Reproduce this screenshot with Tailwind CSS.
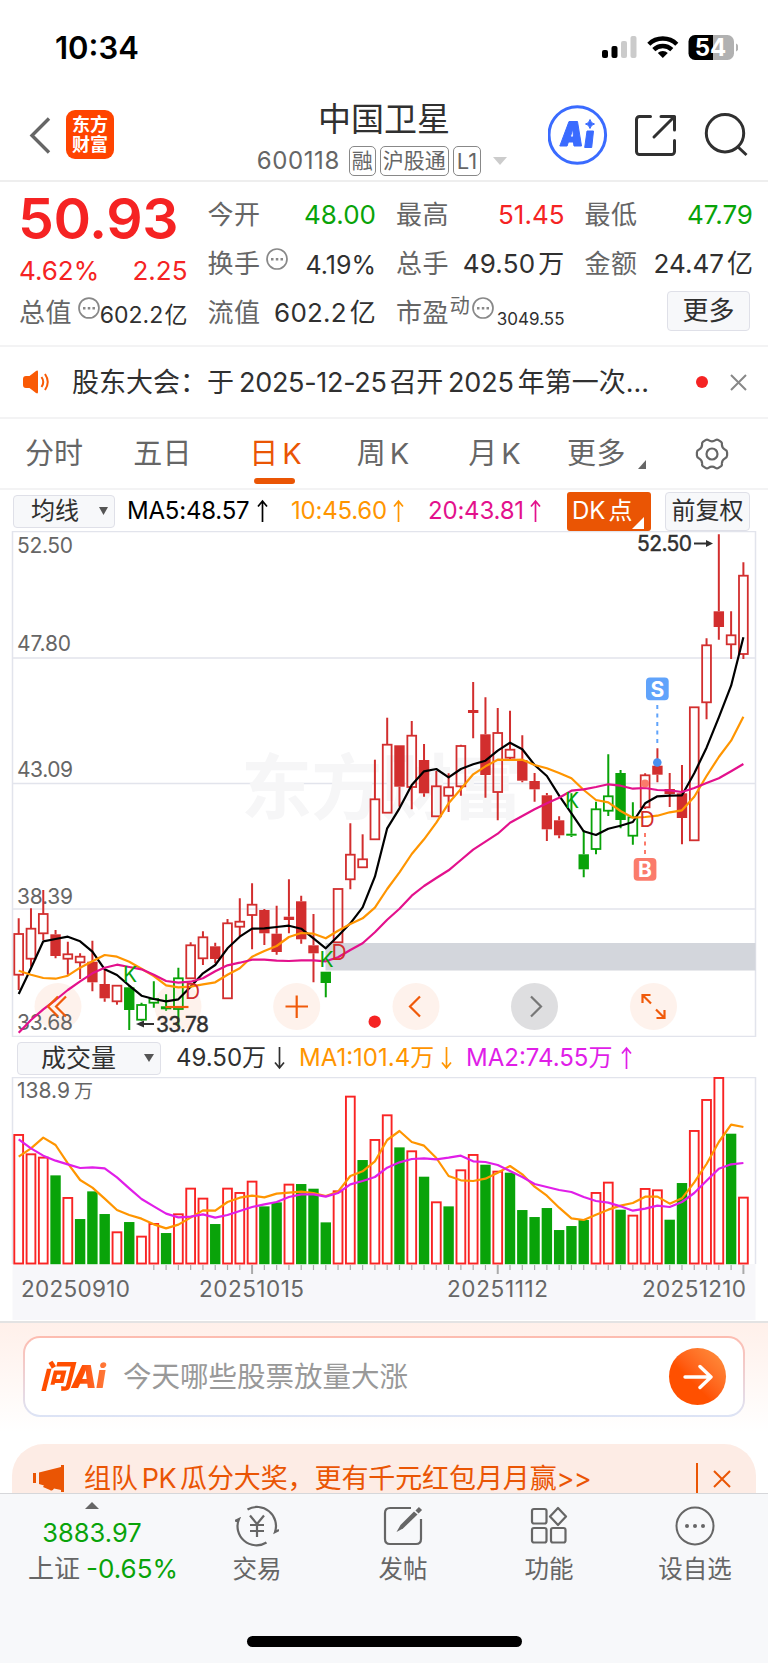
<!DOCTYPE html>
<html lang="zh-CN">
  <head>
    <meta charset="UTF-8" />
    <meta name="viewport" content="width=device-width, initial-scale=1.0" />
    <title>中国卫星 600118</title>
    <script src="https://cdn.jsdelivr.net/npm/@tailwindcss/browser@4"></script>
  </head>
  <body class="bg-white">
    <div class="w-[768px] h-[1663px] overflow-hidden flex flex-col bg-white text-[#303030] whitespace-nowrap leading-none font-[Inter,'Noto_Sans_CJK_SC',sans-serif]">
      <!-- status bar -->
      <div class="h-[92px] shrink-0 flex justify-between pl-[55px] pr-[30px] pt-[31px]">
        <span class="text-[31px] font-semibold text-black leading-[33px]">10:34</span>
        <svg class="mt-[3px]" width="138" height="28" viewBox="600 34 138 28">
          <rect x="602" y="50" width="6" height="8" rx="2" />
          <rect x="611.5" y="46" width="6" height="12" rx="2" />
          <rect x="621" y="41" width="6" height="17" rx="2" fill="#cbcbcb" />
          <rect x="630.5" y="36" width="6" height="22" rx="2" fill="#cbcbcb" />
          <g fill="none" stroke="#000" stroke-width="4.4">
            <path d="M648.8 44.2a20 20 0 0 1 28 0" />
            <path d="M653.8 49.6a13 13 0 0 1 18 0" />
          </g>
          <path d="M662.8 58l-5-5a7.5 7.5 0 0 1 10 0z" />
          <path d="M695 35h18v25h-18a6.500 6.500 0 0 1-6.500-6.500v-12a6.500 6.500 0 0 1 6.500-6.500z" />
          <path d="M713 35h14.500a6.500 6.500 0 0 1 6.500 6.500v12a6.500 6.500 0 0 1-6.500 6.500h-14.500z" fill="#b1b1b1" />
          <path d="M736 43.500q2.500 1 2.500 4t-2.500 4z" fill="#b1b1b1" />
          <text x="710.500" y="55.800" text-anchor="middle" font-size="24" font-weight="700" fill="#fff">54</text>
        </svg>
      </div>

      <!-- header -->
      <div class="h-[90px] shrink-0 flex border-b-2 border-[#eee]">
        <div class="w-[218px] flex pt-[18px] pl-[29px]">
          <svg class="mt-[7px]" width="22" height="38" viewBox="0 0 22 38" fill="none" stroke="#666" stroke-width="3.400">
            <path d="M20 1.500L3 18.500l17 17" />
          </svg>
          <div class="ml-[15px] w-[48px] h-[49px] rounded-[9px] bg-[#ff4400] text-white text-[18px] font-bold leading-[20px] text-center pt-[5px]">东方<br />财富</div>
        </div>
        <div class="w-[330px] flex flex-col items-center pt-[9px]">
          <h1 class="text-[33px] leading-[36px] ml-[2px]">中国卫星</h1>
          <div class="flex items-center text-[#666] mt-[9px] ml-[-2px]">
            <span class="text-[24px] w-[92px] tracking-[0.6px]">600118</span>
            <span class="text-[21px] h-[30px] leading-[28px] border-[1.5px] border-[#888] rounded-[5px] px-[2px] mr-[4px]">融</span>
            <span class="text-[21px] h-[30px] leading-[28px] border-[1.5px] border-[#888] rounded-[5px] px-[2px] mr-[4px]">沪股通</span>
            <span class="text-[22px] h-[30px] leading-[28px] border-[1.5px] border-[#888] rounded-[5px] px-[3px] mr-[12px]">L1</span>
            <svg width="14" height="8" viewBox="0 0 14 8"><path d="M0 0h14l-7 8z" fill="#ccc" /></svg>
          </div>
        </div>
        <svg width="220" height="66" viewBox="548 102 220 66" class="mt-[10px]" fill="none" stroke="#303030" stroke-width="3">
          <circle cx="577.300" cy="135" r="28.300" stroke="#3a6bff" />
          <path d="M569 121.500h8.500l4 24.500h-7.500l-.6-4h-5l-1.300 4h-7.300zM572.800 129l-2.500 8h3.200zM587 131h6.500l-1.800 16.500h-7z" fill="#3a6bff" fill-rule="evenodd" stroke="#3a6bff" stroke-width="1" stroke-linejoin="round" />
          <path d="M590 119.500q1 4 4.500 4.500-3.500.6-4.500 4.500-1-4-4.500-4.500 3.500-.5 4.500-4.500z" fill="#3a6bff" stroke="#3a6bff" stroke-width="1" />
          <g stroke-linecap="round" stroke-linejoin="round">
            <path d="M650.500 116.500h-11a3 3 0 0 0-3 3v32a3 3 0 0 0 3 3h32a3 3 0 0 0 3-3v-11" />
            <path d="M661 116.500h13.500v13.500M674 117l-20 20" />
          </g>
          <circle cx="725" cy="133.200" r="18.700" />
          <path d="M737.500 146.500l9 8.500" />
        </svg>
      </div>

      <!-- quote -->
      <div class="h-[165px] shrink-0 grid grid-cols-4 gap-x-5 pl-[19px] pr-[15px] pt-[9px] text-[26px] border-b-2 border-[#f3f3f4]">
        <div class="flex flex-col text-[#f52323]">
          <div class="h-[54px] flex items-center text-[57px] font-semibold tracking-[-0.4px] ml-[-1px]">50.93</div>
          <div class="h-[52px] flex items-center justify-between"><span>4.62%</span><span>2.25</span></div>
          <div class="h-[32px] flex items-center text-[#303030]">
            <span class="text-[#666] tracking-[0.4px]">总值</span>
            <svg class="ml-[6px] mb-[10px]" width="22" height="22" viewBox="0 0 22 22"><circle cx="11" cy="11" r="10" fill="none" stroke="#888" stroke-width="1.700" /><path d="M5 10h2.500v2.500H5zM9.800 10h2.500v2.500H9.800zM14.500 10H17v2.500h-2.500z" fill="#888" /></svg>
            <span class="text-[23px] mt-[4px] w-[88px] flex justify-between"><span>602.2</span><span>亿</span></span>
          </div>
        </div>
        <div class="flex flex-col">
          <div class="h-[48px] flex items-center justify-between"><span class="text-[#666] tracking-[0.4px]">今开</span><span class="text-[#09a309]">48.00</span></div>
          <div class="h-[49px] flex items-center">
            <span class="text-[#666] tracking-[0.4px]">换手</span>
            <svg class="ml-[6px] mb-[10px]" width="22" height="22" viewBox="0 0 22 22"><circle cx="11" cy="11" r="10" fill="none" stroke="#888" stroke-width="1.700" /><path d="M5 10h2.500v2.500H5zM9.800 10h2.500v2.500H9.800zM14.500 10H17v2.500h-2.500z" fill="#888" /></svg>
            <span class="ml-auto text-[25px] mt-[3px]">4.19%</span>
          </div>
          <div class="h-[49px] flex items-center justify-between"><span class="text-[#666] tracking-[0.4px]">流值</span><span class="tracking-[0.2px]">602.2<span class="ml-[3px]">亿</span></span></div>
        </div>
        <div class="flex flex-col">
          <div class="h-[48px] flex items-center justify-between"><span class="text-[#666] tracking-[0.4px]">最高</span><span class="text-[#f52323]">51.45</span></div>
          <div class="h-[49px] flex items-center justify-between"><span class="text-[#666] tracking-[0.4px]">总手</span><span class="tracking-[0.2px]">49.50<span class="ml-[3px]">万</span></span></div>
          <div class="h-[49px] flex items-center">
            <span class="text-[#666] tracking-[0.4px]">市盈</span><span class="text-[20px] text-[#666] mb-[14px] ml-[1px]">动</span>
            <svg class="ml-[2px] mb-[10px]" width="22" height="22" viewBox="0 0 22 22"><circle cx="11" cy="11" r="10" fill="none" stroke="#888" stroke-width="1.700" /><path d="M5 10h2.500v2.500H5zM9.800 10h2.500v2.500H9.800zM14.500 10H17v2.500h-2.500z" fill="#888" /></svg>
            <span class="ml-auto text-[17px] mt-[13px]">3049.55</span>
          </div>
        </div>
        <div class="flex flex-col">
          <div class="h-[48px] flex items-center justify-between"><span class="text-[#666] tracking-[0.4px]">最低</span><span class="text-[#09a309]">47.79</span></div>
          <div class="h-[49px] flex items-center justify-between"><span class="text-[#666] tracking-[0.4px]">金额</span><span>24.47<span class="ml-[3px]">亿</span></span></div>
          <button class="self-end mt-[3px] mr-[3px] w-[83px] h-[40px] rounded-[4px] border border-[#dfe0e8] bg-[#f7f8fa]">更多</button>
        </div>
      </div>

      <!-- notice -->
      <div class="h-[72px] shrink-0 flex items-center pl-[23px] pr-[21px] border-b-2 border-[#f3f3f4] text-[27px]">
        <svg width="28" height="24" viewBox="0 0 28 24" fill="#f95a05">
          <path d="M0 9q0-3 3-3h3.500L13 1q2-1.300 2 1v20q0 2.300-2 1l-6.500-5H3q-3 0-3-3z" />
          <path d="M18.500 7q3.500 5 0 10M22 4q5.500 8 0 16" fill="none" stroke="#f95a05" stroke-width="2" />
        </svg>
        <span class="ml-[21px]">股东大会：</span>
        <span>于</span><span class="ml-[5px] tracking-[-0.3px]">2025-12-25</span><span class="ml-[3px] tracking-[-0.3px]">召开</span><span class="ml-[5px] tracking-[-0.2px]">2025</span><span class="ml-[4px]">年第一次...</span>
        <span class="ml-auto w-[12px] h-[12px] rounded-full bg-[#f52323]"></span>
        <svg class="ml-[22px]" width="17" height="17" viewBox="0 0 17 17" stroke="#888" stroke-width="2"><path d="M1 1l15 15M16 1L1 16" /></svg>
      </div>

      <!-- period tabs -->
      <div class="h-[71px] shrink-0 grid grid-cols-[108px_109px_119px_96px_126px_98px_112px] border-b-2 border-[#f3f3f4] text-[29px] text-[#666]">
        <div class="flex items-center justify-center">分时</div>
        <div class="flex items-center justify-center tracking-[0.3px]">五日</div>
        <div class="flex flex-col items-center text-[#ea5504]">
          <div class="h-[59px] pt-[20px] mr-[2px]">日<span class="ml-[4px]">K</span></div>
          <div class="w-[41px] h-[6px] rounded-[3px] bg-[#ea5504] mr-[4px]"></div>
        </div>
        <div class="flex items-center justify-center pr-[2px]">周<span class="ml-[4px]">K</span></div>
        <div class="flex items-center justify-center pr-[1px]">月<span class="ml-[4px]">K</span></div>
        <div class="flex items-center pl-[9px] tracking-[0.5px]">更多<svg class="ml-[12px] mt-[22px]" width="9" height="9" viewBox="0 0 9 9"><path d="M8 0v9H0z" fill="#666" /></svg></div>
        <div class="flex items-center justify-center">
          <svg width="34" height="32" viewBox="0 0 34 32" fill="none" stroke="#666" stroke-width="2.200">
            <path d="M10.500 2.200q1.500-1 3 0 3.500 2.300 7 0 1.500-1 3 0l2.600 1.700q1 .8.800 2.200-.2 3.500 3 5.500 2.200 1 2.200 2.800v3.200q0 1.800-2.200 2.800-3.200 2-3 5.500.2 1.400-.8 2.200l-2.600 1.700q-1.500 1-3 0-3.500-2.300-7 0-1.500 1-3 0l-2.600-1.700q-1-.8-.8-2.200.2-3.500-3-5.500-2.200-1-2.200-2.800v-3.200q0-1.800 2.200-2.800 3.200-2 3-5.500-.2-1.400.8-2.200z" />
            <circle cx="17" cy="16" r="5.500" />
          </svg>
        </div>
      </div>

      <!-- moving averages -->
      <div class="h-[41px] shrink-0 flex items-center pl-[13px] pt-px text-[24px]">
        <div class="w-[102px] h-[33px] flex items-center rounded-[4px] border border-[#dfe0e8] bg-[#f7f8fa] pl-[17px]">均线<svg class="ml-[20px]" width="9" height="8" viewBox="0 0 9 8"><path d="M0 0h9l-4.500 8z" fill="#555" /></svg></div>
        <span class="ml-[12px] w-[129px] text-black tracking-[-0.2px]">MA5:48.57</span>
        <svg width="13" height="24" viewBox="0 0 13 24" fill="none" stroke="#000" stroke-width="1.700"><path d="M6.500 23V2M2 7.500L6.500 2 11 7.500" /></svg>
        <span class="ml-[22px] w-[101px] text-[#ff9500] tracking-[-0.2px]">10:45.60</span>
        <svg width="13" height="24" viewBox="0 0 13 24" fill="none" stroke="#ff9500" stroke-width="1.700"><path d="M6.500 23V2M2 7.500L6.500 2 11 7.500" /></svg>
        <span class="ml-[23px] w-[101px] text-[#e3118c] tracking-[-0.2px]">20:43.81</span>
        <svg width="13" height="24" viewBox="0 0 13 24" fill="none" stroke="#e3118c" stroke-width="1.700"><path d="M6.500 23V2M2 7.500L6.500 2 11 7.500" /></svg>
        <div class="ml-[25px] w-[84px] h-[39px] flex items-center rounded-[3px] bg-[#ea5504] text-white pl-[5px]">DK<span class="ml-[3px]">点</span><svg class="mt-[23px]" width="12" height="12" viewBox="0 0 12 12"><path d="M12 0v12H0z" fill="#fff" /></svg></div>
        <div class="ml-[14px] w-[85px] h-[39px] flex items-center justify-center rounded-[4px] border border-[#dfe0e8] bg-[#f7f8fa]">前复权</div>
      </div>

      <!-- candles -->
      <svg id="kline" class="shrink-0" width="768" height="506" viewBox="0 531 768 506">
        <g fill="none" stroke="#e2e4ec" stroke-width="1.500">
          <path d="M12.500 531.500h743v505h-743z" />
          <path d="M12.500 658h743M12.500 783.500h743M12.500 909h743" />
        </g>
        <text x="241" y="813" font-size="71" font-weight="700" fill="#f6f6f7" textLength="282">东方财富</text>
        <rect x="325.500" y="943" width="430" height="27.500" fill="#d3d6dc" />
        <g id="kline-buttons">
          <g fill="#fef2ec">
            <circle cx="58" cy="1006.500" r="23.500" />
            <circle cx="178" cy="1006.500" r="23.500" />
            <circle cx="296.700" cy="1006.500" r="23.500" />
            <circle cx="416" cy="1006.500" r="23.500" />
            <circle cx="534.500" cy="1006.500" r="23.500" fill="#dedee0" />
            <circle cx="653.500" cy="1006.500" r="23.500" />
          </g>
        </g>
        <g font-size="21" fill="#666">
          <text x="17" y="553" textLength="56">52.50</text>
          <text x="17" y="650.500" textLength="54">47.80</text>
          <text x="17" y="777" textLength="56">43.09</text>
          <text x="17" y="904" textLength="56">38.39</text>
          <text x="17" y="1030" textLength="56">33.68</text>
        </g>
        <g id="candles"></g>
        <g id="averages" fill="none" stroke-width="2.200"></g>
        <g font-size="21" fill="#09a309">
          <text x="123" y="982">K</text>
          <text x="319.500" y="966.500">K</text>
          <text x="565" y="808">K</text>
        </g>
        <g font-size="21" fill="#d22e2e">
          <text x="185" y="998.500">D</text>
          <text x="331.500" y="960">D</text>
          <text x="639.500" y="827">D</text>
        </g>
        <g font-size="21" fill="#303030" stroke="#303030" stroke-width=".4">
          <text x="637" y="551" textLength="55">52.50</text>
          <text x="156" y="1032" textLength="53">33.78</text>
        </g>
        <g stroke="#303030" stroke-width="2" fill="#303030">
          <path d="M694 543.500h14" /><path d="M706 540l7 3.500-7 3.500z" stroke="none" />
          <path d="M154 1024h-12" /><path d="M144 1020.500l-8 3.500 8 3.500z" stroke="none" />
        </g>
        <!-- trade marks -->
        <circle cx="657.300" cy="762.500" r="4.300" fill="#4a90f0" />
        <path d="M657.300 705v40" stroke="#60a3fb" stroke-width="2" stroke-dasharray="4 4.500" />
        <rect x="646" y="677.500" width="22.700" height="22.700" rx="4" fill="#60a3fb" />
        <text x="657.300" y="696.500" text-anchor="middle" font-size="21" font-weight="700" fill="#fff">S</text>
        <circle cx="645" cy="783.500" r="4" fill="#fb7b6b" />
        <path d="M645 833v22" stroke="#fb7b6b" stroke-width="2" stroke-dasharray="4 4.500" />
        <rect x="633.700" y="858" width="22.700" height="22.700" rx="4" fill="#fb7b6b" />
        <text x="645" y="877" text-anchor="middle" font-size="21" font-weight="700" fill="#fff">B</text>
        <!-- chart control glyphs -->
        <g fill="none" stroke="#f05a0a" stroke-width="2.200">
          <path d="M58 996.500l-10 10 10 10M66 996.500l-10 10 10 10" />
          <path d="M165.500 1007h23" />
          <path d="M285.500 1006.500h22.500M296.700 995.500v22.500" />
          <path d="M420 996.500l-10 10 10 10" />
          <path d="M531 996.500l10 10-10 10" stroke="#777" />
          <path d="M642.500 1003v-8h8M643 995.500l8 8M664.500 1010v8h-8M664 1017.500l-8-8" />
        </g>
        <circle cx="374.700" cy="1021.700" r="6.200" fill="#f52323" />
      </svg>

      <!-- volume legend -->
      <div class="h-[40px] shrink-0 flex items-center pl-[17px] pt-[2px] text-[24px]">
        <div class="w-[144px] h-[33px] flex items-center rounded-[4px] border border-[#dfe0e8] bg-[#f7f8fa] pl-[23px] text-[25px]">成交量<svg class="ml-[28px]" width="10" height="8" viewBox="0 0 10 8"><path d="M0 0h10l-5 8z" fill="#555" /></svg></div>
        <span class="ml-[15px] w-[97px]">49.50万</span>
        <svg width="13" height="24" viewBox="0 0 13 24" fill="none" stroke="#303030" stroke-width="1.700"><path d="M6.500 1v21M2 16.500L6.500 22l4.500-5.500" /></svg>
        <span class="ml-[13px] w-[141px] text-[#ff9500]">MA1:101.4万</span>
        <svg width="13" height="24" viewBox="0 0 13 24" fill="none" stroke="#ff9500" stroke-width="1.700"><path d="M6.500 1v21M2 16.500L6.500 22l4.500-5.500" /></svg>
        <span class="ml-[13px] w-[154px] text-[#e01ee8]">MA2:74.55万</span>
        <svg width="13" height="24" viewBox="0 0 13 24" fill="none" stroke="#e01ee8" stroke-width="1.700"><path d="M6.500 23V2M2 7.500L6.500 2 11 7.500" /></svg>
      </div>

      <!-- volume bars and date axis -->
      <svg id="volume" class="shrink-0" width="768" height="244" viewBox="0 1077 768 244">
        <path d="M12.500 1264v-186.500h743v186.500" fill="none" stroke="#e2e4ec" stroke-width="1.500" />
        <rect x="12.500" y="1264" width="743" height="56" fill="#f7f7fa" />
        <g font-size="21" fill="#666">
          <text x="17" y="1097.500" textLength="53">138.9</text>
          <text x="74" y="1098" font-size="19">万</text>
        </g>
        <g id="volume-bars"></g>
        <g id="volume-averages" fill="none" stroke-width="2.200"></g>
        <g font-size="22.500" fill="#666">
          <text x="21" y="1297" textLength="109">20250910</text>
          <text x="199" y="1297" textLength="105">20251015</text>
          <text x="447" y="1297" textLength="101">20251112</text>
          <text x="642" y="1297" textLength="104">20251210</text>
        </g>
      </svg>

      <!-- ask AI -->
      <div class="h-[123px] shrink-0 border-t-2 border-[#e3e3e3] bg-linear-to-b from-[#fff0ea] to-white to-90% px-[23px] pt-[13px]">
        <div class="h-[81px] rounded-[17px] bg-linear-to-b from-[#fdbcb0] to-[#dce4f6] p-[2px]">
          <div class="h-[77px] rounded-[15px] bg-white flex items-center pl-[14px] pr-[17px]">
            <span class="w-[84px] text-[32px] font-black italic tracking-[-0.6px] bg-linear-to-r from-[#ff4e00] from-50% to-[#ff9350] bg-clip-text text-transparent leading-[40px] pl-px">问Ai</span>
            <span class="text-[28.500px] text-[#999] pt-[2px]">今天哪些股票放量大涨</span>
            <div class="ml-auto w-[57px] h-[57px] rounded-full bg-linear-to-tr from-[#ff5000] from-40% to-[#ff9340] flex items-center justify-center">
              <svg width="30" height="26" viewBox="0 0 30 26" fill="none" stroke="#fff" stroke-width="3.400" stroke-linecap="round" stroke-linejoin="round"><path d="M2 13h26M17 2.500L28 13 17 23.500" /></svg>
            </div>
          </div>
        </div>
      </div>

      <!-- promo banner -->
      <div class="h-[49px] shrink-0 mx-[12px] rounded-t-[32px] bg-[#fdece5] flex pl-[21px] pr-[25px] text-[27px] text-[#ea5504]">
        <svg class="mt-[20px]" width="32" height="28" viewBox="0 0 32 28" fill="#ea5504"><path d="M0 9h3v10H0zM6 8.500L28 3V1h3v27h-3v-2l-7-1.500q-1.500 3-4 1.500L10 23l1-1.500-5-1.500z" /></svg>
        <span class="ml-[19px] pt-[21px] tracking-[-0.1px]">组队<span class="mx-[4px] tracking-[-0.6px]">PK</span>瓜分大奖，更有千元红包月月赢<span class="tracking-[-0.6px]">&gt;&gt;</span></span>
        <span class="ml-auto mt-[19px] w-[2px] h-[30px] bg-[#ea5504]"></span>
        <svg class="ml-[15px] mt-[26px]" width="18" height="18" viewBox="0 0 18 18" stroke="#ea5504" stroke-width="2"><path d="M1 1l16 16M17 1L1 17" /></svg>
      </div>

      <!-- bottom nav -->
      <div class="h-[170px] shrink-0 border-t border-[#d6d7da] bg-[#f7f8fa] flex flex-col">
        <div class="grid grid-cols-[184px_repeat(4,1fr)] h-[142px] text-[26px] text-[#666]">
          <div class="flex flex-col items-center pt-[8px]">
            <svg width="14" height="7" viewBox="0 0 14 7"><path d="M7 0l7 7H0z" fill="#666" /></svg>
            <span class="mt-[11px] text-[25.500px] leading-[26px] text-[#09a309]">3883.97</span>
            <div class="mt-[10px] ml-[22px] flex gap-[6px]"><span>上证</span><span class="text-[#09a309]">-0.65%</span></div>
          </div>
          <div class="flex flex-col items-center pt-[11px]">
            <svg width="44" height="42" viewBox="0 0 44 42" fill="none" stroke="#666" stroke-width="2.200"><path d="M12.500 4.500A19 19 0 0 1 40 27l4-2M31.500 37.500A19 19 0 0 1 4 14l-4 2" /><path d="M15 10.500l7 8.500 7-8.500M22 19v13M15 20h14M15 26h14" /></svg>
            <span class="mt-[10px] text-[24.500px]">交易</span>
          </div>
          <div class="flex flex-col items-center pt-[11px]">
            <svg width="40" height="42" viewBox="0 0 40 42" fill="none" stroke="#666" stroke-width="2.200"><path d="M28 3H7Q2 3 2 8v26q0 5 5 5h26q5 0 5-5V14" /><path d="M34 7l3.500-3.500" stroke-width="4.500" /><path d="M13.500 27l4-7L31 6.500l3.500 3L20 23.500z" fill="#666" stroke="none" /></svg>
            <span class="mt-[10px] text-[24.500px]">发帖</span>
          </div>
          <div class="flex flex-col items-center pt-[11px]">
            <svg width="38" height="42" viewBox="0 0 38 42" fill="none" stroke="#666" stroke-width="2.200"><rect x="2" y="4" width="14.500" height="14.500" rx="2" /><rect x="2" y="23" width="14.500" height="14.500" rx="2" /><rect x="21" y="23" width="14.500" height="14.500" rx="2" /><path d="M28 3l8 8.500-8 8.500-8-8.500z" stroke-linejoin="round" /></svg>
            <span class="mt-[10px] text-[24.500px]">功能</span>
          </div>
          <div class="flex flex-col items-center pt-[11px]">
            <svg width="42" height="42" viewBox="0 0 42 42" fill="none" stroke="#666" stroke-width="2"><circle cx="21" cy="21" r="18.500" /><g fill="#666" stroke="none"><circle cx="13" cy="21" r="2" /><circle cx="21" cy="21" r="2" /><circle cx="29" cy="21" r="2" /></g></svg>
            <span class="mt-[10px] text-[24.500px]">设自选</span>
          </div>
        </div>
        <div class="w-[275px] h-[11px] rounded-full bg-black ml-[247px]"></div>
      </div>
    </div>

    <script>
      const x = (i) => 18.7 + i * 12.283;
      const RED = "#d22e2e";
      const GREEN = "#09a309";

      // r/g = hollow, R/G = filled; then high, body top, body bottom, low
      const candles = [
        ["r", 918.3, 934, 974.7, 990], ["r", 908.3, 928.7, 958.7, 966.7], ["r", 890, 914, 933.3, 940],
        ["R", 930, 934.3, 956, 958.3], ["r", 941.7, 954.3, 958.7, 974.7], ["r", 953.3, 956.7, 962.3, 979],
        ["R", 940.7, 961.7, 982.3, 991.3], ["R", 970, 984, 998.3, 1001.7], ["r", 985.7, 985.7, 1001.3, 1004.7],
        ["G", 985, 987.3, 1010, 1030], ["g", 1002.7, 1005, 1019.7, 1020.7], ["g", 981.3, 999, 1002.7, 1007.7],
        ["G", 994.3, 1006.3, 1009.3, 1010.7], ["g", 967.7, 978.3, 1009, 1027], ["r", 942.3, 945.3, 978.3, 979],
        ["r", 931.3, 937.3, 958.3, 965], ["R", 942.7, 946.3, 959, 963], ["r", 919, 923.3, 998.3, 998.3],
        ["r", 898.3, 921.7, 926.7, 936.7], ["r", 883.3, 904.7, 915, 949.3], ["R", 909, 910, 933.3, 945],
        ["R", 905.7, 933.7, 952, 954.7], ["R", 879.3, 916.7, 920, 933.3], ["R", 895.7, 901.3, 939.3, 943.7],
        ["R", 914, 945.3, 953.3, 982.3], ["G", 971.7, 971.7, 983, 997.3], ["r", 889, 889, 942.3, 942.3],
        ["r", 823.3, 854.7, 879.3, 889.3], ["r", 834.3, 859.3, 867.3, 867.3], ["r", 759.7, 799.3, 839.3, 839.3],
        ["r", 717.7, 744.7, 812.7, 812.7], ["R", 745.3, 745.3, 786.7, 806.7], ["r", 721, 735.7, 787, 809.3],
        ["R", 744, 760, 793.3, 796.7], ["r", 771, 786.3, 816.3, 816.3], ["r", 773.3, 787.3, 795.7, 812],
        ["r", 744.7, 746, 786.3, 795.7], ["R", 682, 710, 713, 738.3], ["R", 697.3, 734.3, 775, 797.7],
        ["r", 708, 733, 792, 820.3], ["r", 710.7, 749.7, 757.7, 760], ["R", 735.3, 760, 780.7, 782.3],
        ["R", 773, 781, 789.3, 801.7], ["R", 793, 795.3, 829.3, 841], ["R", 816.3, 820.3, 835.3, 838.3],
        ["G", 793.3, 833.7, 835.7, 837], ["G", 830, 854.3, 869.3, 877.3], ["g", 801.7, 809.3, 849, 854.3],
        ["g", 754.3, 796.3, 810.7, 816], ["G", 770, 773, 820, 828.3], ["g", 802.3, 817.3, 835.7, 844.7],
        ["r", 773.3, 775.3, 807.3, 809], ["R", 748.3, 765.7, 774.7, 782.3], ["R", 773, 789, 794, 807],
        ["R", 765, 793.3, 818, 844.3], ["r", 707.3, 707.3, 840.3, 840.3], ["r", 638.3, 645.3, 702.3, 719.3],
        ["R", 534.3, 611.3, 627, 639.7], ["r", 611.3, 635.3, 644.3, 659], ["r", 562.3, 575.7, 654, 659],
      ];

      const ma5 = [994, 968.3, 941.3, 939, 936.7, 941.3, 951.7, 969.3, 975, 985.7, 995.7, 999, 1001.3, 999.3, 986.7, 973.3, 965, 948.3, 936.7, 928.7, 928.3, 927, 925.7, 928.7, 938.3, 948.3, 936, 923.3, 907.3, 876.7, 828.3, 808.3, 785, 771.3, 769, 777.3, 769, 764.3, 760.7, 750.7, 742.7, 749.3, 765, 776, 795.7, 813.3, 831.3, 835, 828.7, 825.7, 822, 803.3, 796.3, 795.7, 795.3, 773.3, 747.7, 717.3, 685.7, 637.3];
      const ma10 = [970.7, 974.7, 978, 978.7, 975.7, 967.7, 961.3, 955, 956.7, 961.7, 968.7, 976, 985.3, 987.3, 986.7, 984.3, 982.3, 974.7, 968.3, 956.7, 951, 946, 937, 933, 933.7, 938.3, 930.7, 924, 918.3, 907.7, 889, 872.3, 854, 839.3, 822.7, 803.3, 789, 774.3, 766.3, 759.7, 760, 759.7, 765, 768.3, 773, 778.3, 790, 800, 802.3, 811, 817.7, 817, 815.7, 812.3, 810.3, 796.7, 776, 757, 740.7, 716.7];
      const ma20 = [1032.7, 1020, 1009.3, 1000, 990, 981.3, 973.3, 967.7, 964.7, 967, 969.3, 974.7, 981, 982.7, 981.7, 978.3, 971.3, 965.3, 962.7, 959.7, 959.7, 960.7, 961, 960.3, 960.3, 961.3, 957.3, 950, 943.3, 932.3, 919.7, 908.7, 895.7, 886, 878, 870.3, 860, 849.7, 841.7, 833.7, 822.7, 816, 809.3, 803.3, 797.7, 790.7, 789.3, 787, 784.3, 785.7, 788.7, 788, 790, 790.3, 792, 788, 783, 778.3, 771.3, 764];

      // volume values are measured downwards, in thirds of a pixel
      const volume = "r314 r372 r382 g437 r503 g568 g485 g553 r606 g577 r619 r581 g610 r552 r475 r505 g583 r475 r488 r454 g530 g518 r463 g463 g477 g578 r483 r199 g391 r329 r255 g353 r363 g441 r516 g530 r420 r374 g405 r424 g429 g541 g562 g535 g601 g589 g571 r488 r457 g540 r556 r476 r480 g570 g460 r302 r209 r143 g312 r502".split(" ");
      const vma1 = [380, 355, 323, 345, 400, 450, 473, 506, 540, 555, 566, 583, 595, 584, 563, 541, 542, 516, 503, 497, 502, 491, 488, 485, 489, 498, 485, 438, 424, 394, 330, 303, 336, 347, 384, 438, 451, 453, 446, 428, 408, 433, 470, 497, 533, 565, 570, 554, 539, 527, 519, 500, 500, 521, 505, 457, 402, 336, 284, 291];
      const vma2 = [328, 355, 377, 392, 403, 414, 412, 415, 442, 475, 507, 529, 551, 562, 560, 553, 563, 555, 543, 531, 523, 516, 501, 493, 493, 500, 489, 463, 453, 441, 413, 397, 387, 385, 388, 383, 377, 394, 396, 405, 423, 441, 462, 471, 480, 486, 501, 513, 518, 529, 542, 536, 527, 531, 516, 489, 452, 416, 403, 399];
      const vy = (v) => 1030 + v / 3;

      const line = (ys, color) =>
        `<polyline points="${ys.map((y, i) => `${x(i)},${y}`).join(" ")}" stroke="${color}" stroke-linejoin="round"/>`;

      document.getElementById("candles").innerHTML = candles
        .map(([t, h, top, bottom, l], i) => {
          const color = t.toLowerCase() === "r" ? RED : GREEN;
          const hollow = t === "r" || t === "g";
          const cx = x(i);
          const body = hollow
            ? `<rect x="${cx - 4.4}" y="${top}" width="8.8" height="${bottom - top}" fill="none" stroke="${color}" stroke-width="1.8"/>`
            : `<rect x="${cx - 5.2}" y="${top}" width="10.4" height="${bottom - top}" fill="${color}"/>`;
          return `<path d="M${cx} ${h}V${top}M${cx} ${bottom}V${l}" stroke="${color}" stroke-width="2"/>${body}`;
        })
        .join("");

      document.getElementById("averages").innerHTML =
        line(ma5, "#000") + line(ma10, "#ff9500") + line(ma20, "#e3118c");

      document.getElementById("volume-bars").innerHTML = volume
        .map((s, i) => {
          const top = vy(Number(s.slice(1)));
          const cx = x(i);
          const bar = s[0] === "r"
            ? `<rect x="${cx - 4.4}" y="${top + 0.3}" width="8.8" height="${1263.2 - top}" fill="#fff" stroke="#f92424" stroke-width="1.9"/>`
            : `<rect x="${cx - 5.2}" y="${top - 0.3}" width="10.4" height="${1264.5 - top}" fill="${GREEN}"/>`;
          const major = i === 19 || i === 39 || i === 59;
          const tick = i > 10
            ? `<path d="M${cx} 1265v${major ? 9 : 5}" stroke="#aaa" stroke-width="${major ? 2 : 1.2}"/>`
            : "";
          return bar + tick;
        })
        .join("");

      document.getElementById("volume-averages").innerHTML =
        line(vma1.map(vy), "#ff9500") + line(vma2.map(vy), "#e01ee8");
    </script>
  </body>
</html>
